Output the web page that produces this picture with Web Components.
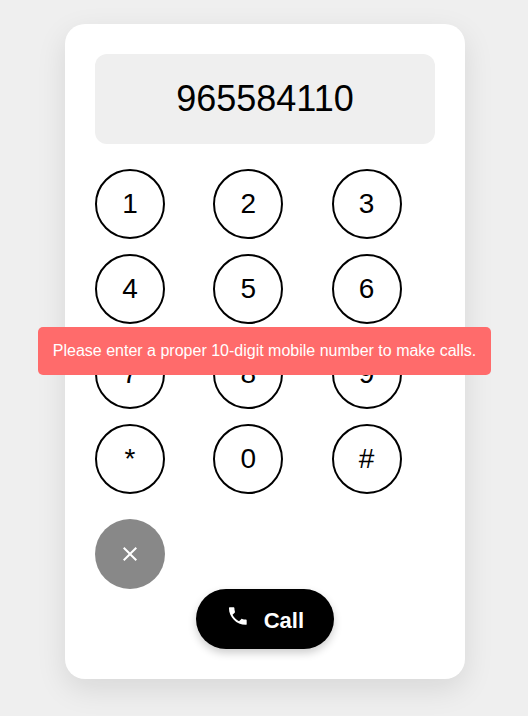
<!DOCTYPE html>
<html lang="en"><head><meta charset="utf-8"><title>Dialer</title>
<style>
body{margin:0;height:716px;overflow:hidden;background:#efefef;font-family:"Liberation Sans",Arial,sans-serif;color:#000;display:flex;justify-content:center;align-items:flex-start;padding:24px 0 0 2px;box-sizing:border-box}
</style></head><body>
<phone-dialer></phone-dialer>
<toast-message>Please enter a proper 10-digit mobile number to make calls.</toast-message>
<script>
class BaseElement extends HTMLElement{
  constructor(){super();this.attachShadow({mode:'open'}).innerHTML=this.constructor.markup;}
}
class NumberDisplay extends BaseElement{
  static markup=`<style>:host{display:flex;align-items:center;justify-content:center;height:90px;border-radius:12px;background:#efefef;font-size:36px;line-height:1}</style><slot></slot>`;
}
class DialKey extends BaseElement{
  static markup=`<style>:host{display:flex;align-items:center;justify-content:center;box-sizing:border-box;width:70px;height:70px;border:2px solid #000;border-radius:50%;background:#fff;font-size:28px;line-height:1}</style><slot></slot>`;
}
class ClearKey extends BaseElement{
  static markup=`<style>:host{display:flex;align-items:center;justify-content:center;width:70px;height:70px;border-radius:50%;background:#888}svg{width:24px;height:24px;fill:#fff}</style>
  <svg viewBox="0 0 24 24"><path d="M19 6.41 17.59 5 12 10.59 6.41 5 5 6.41 10.59 12 5 17.59 6.41 19 12 13.41 17.59 19 19 17.59 13.41 12z"/></svg>`;
}
class CallButton extends BaseElement{
  static markup=`<style>:host{display:flex;align-items:center;box-sizing:border-box;width:138px;height:60px;padding:0 30px;border-radius:30px;background:#000;color:#fff;font-size:22px;font-weight:700;box-shadow:0 4px 8px rgba(0,0,0,.2)}svg{width:24px;height:24px;fill:#fff;margin:-7px 14px 0 0}span{margin-top:4px}</style>
  <svg viewBox="0 0 24 24"><path d="M6.62 10.79c1.44 2.83 3.76 5.14 6.59 6.59l2.2-2.2c.27-.27.67-.36 1.02-.24 1.12.37 2.33.57 3.57.57.55 0 1 .45 1 1V20c0 .55-.45 1-1 1-9.39 0-17-7.61-17-17 0-.55.45-1 1-1h3.5c.55 0 1 .45 1 1 0 1.25.2 2.45.57 3.57.11.35.03.74-.25 1.02z"/></svg><span><slot></slot></span>`;
}
class ToastMessage extends BaseElement{
  static markup=`<style>:host{position:absolute;left:38px;top:327px;box-sizing:border-box;width:453px;height:48px;border-radius:5px;background:#ff6b6b;color:#fff;font-size:16px;display:flex;align-items:center;justify-content:center;white-space:nowrap}</style><slot></slot>`;
}
class PhoneDialer extends BaseElement{
  static markup=`<style>:host{display:flex;flex-direction:column;box-sizing:border-box;width:400px;height:655px;padding:30px;border-radius:20px;background:#fff;box-shadow:0 10px 30px rgba(0,0,0,.1)}
  .keys{display:grid;grid-template-columns:repeat(3,1fr);gap:15px;margin:25px 0}
  call-button{align-self:center}</style>
  <number-display>965584110</number-display>
  <div class="keys">${[1,2,3,4,5,6,7,8,9,'*',0,'#'].map(k=>`<dial-key>${k}</dial-key>`).join('')}</div>
  <clear-key></clear-key><call-button>Call</call-button>`;
}
customElements.define('number-display',NumberDisplay);
customElements.define('dial-key',DialKey);
customElements.define('clear-key',ClearKey);
customElements.define('call-button',CallButton);
customElements.define('toast-message',ToastMessage);
customElements.define('phone-dialer',PhoneDialer);
</script></body></html>
